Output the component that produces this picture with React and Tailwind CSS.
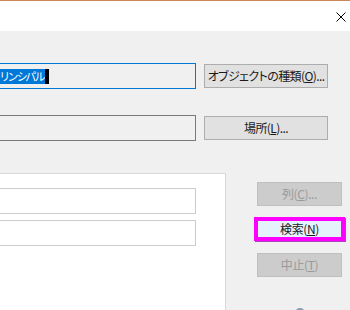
import React from "react";

const font = { fontFamily: '"Noto Sans CJK JP", "Noto Sans", sans-serif' };

function Btn({ children, className = "" }) {
  return (
    <div
      className={
        "h-[24px] shrink-0 flex items-center justify-center whitespace-nowrap text-[12px] tracking-[-0.6px] leading-none border border-[#adadad] bg-[#e1e1e1] text-[#1a1a1a] [font-feature-settings:'palt'] " +
        className
      }
    >
      {children}
    </div>
  );
}

function DisBtn({ children, className = "" }) {
  return (
    <div
      className={
        "h-[24px] w-[85px] shrink-0 flex items-center justify-center whitespace-nowrap text-[12px] tracking-[-0.4px] leading-none border border-[#bfbfbf] bg-[#cccccc] text-[#9a9a9a] [font-feature-settings:'palt'] " +
        className
      }
    >
      {children}
    </div>
  );
}

export default function App() {
  return (
    <div
      className="w-[350px] h-[310px] bg-[#f0f0f0] overflow-hidden flex flex-col"
      style={font}
    >
      {/* title bar */}
      <div className="h-[31px] shrink-0 bg-white border-t border-[#cc8557] flex items-center justify-end pr-[4px]">
        <svg width="10" height="10" viewBox="0 0 10 10" className="mt-[1px]">
          <path d="M0.5 0.5 L9.5 9.5 M9.5 0.5 L0.5 9.5" stroke="#000" strokeWidth="1" fill="none" />
        </svg>
      </div>

      {/* row 1 */}
      <div className="mt-[32px] shrink-0 flex items-center">
        <div className="-ml-[20px] w-[216px] h-[26px] shrink-0 border border-[#0078d7] flex items-center pl-[19px]">
          <span className="h-[15px] flex items-center whitespace-nowrap bg-[#0078d7] text-white text-[11px] tracking-[-1px] leading-none [font-feature-settings:'palt'] pr-[1px]">
            リンシパル
          </span>
          <span className="w-[4px] h-[15px] bg-black" />
        </div>
        <Btn className="ml-[8px] w-[124px]">
          オブジェクトの種類(<u>O</u>)...
        </Btn>
      </div>

      {/* row 2 */}
      <div className="mt-[26px] shrink-0 flex items-center">
        <div className="-ml-[20px] w-[216px] h-[26px] shrink-0 border border-[#7a7a7a]" />
        <Btn className="ml-[8px] w-[124px]">
          場所(<u>L</u>)...
        </Btn>
      </div>

      {/* lower area */}
      <div className="mt-[32px] shrink-0 flex h-[160px]">
        <div className="-ml-[20px] w-[246px] h-[160px] shrink-0 bg-white border border-[#d9d9d9] pt-[14px] flex flex-col gap-[6px]">
          <div className="w-[215px] h-[26px] shrink-0 border border-[#cccccc] bg-white" />
          <div className="w-[215px] h-[26px] shrink-0 border border-[#cccccc] bg-white" />
        </div>
        <div className="ml-[31px] w-[85px] shrink-0 flex flex-col items-center pt-[9px]">
          <DisBtn>
            列(<u>C</u>)...
          </DisBtn>
          <div className="mt-[11px] w-[91px] h-[24px] shrink-0 border-[4px] border-[#ff00ff] bg-[#e5f1fb] flex items-center justify-center whitespace-nowrap text-[12px] tracking-[-0.4px] leading-none text-[#1a1a1a] [font-feature-settings:'palt'] shadow-[1px_1px_0_#b040c0]">
            検索(<u>N</u>)
          </div>
          <DisBtn className="mt-[12px]">
            中止(<u>T</u>)
          </DisBtn>
          <div className="mt-[31px] w-[10px] h-[10px] shrink-0 rounded-full border-2 border-[#8d9bb0]" />
        </div>
      </div>
    </div>
  );
}
